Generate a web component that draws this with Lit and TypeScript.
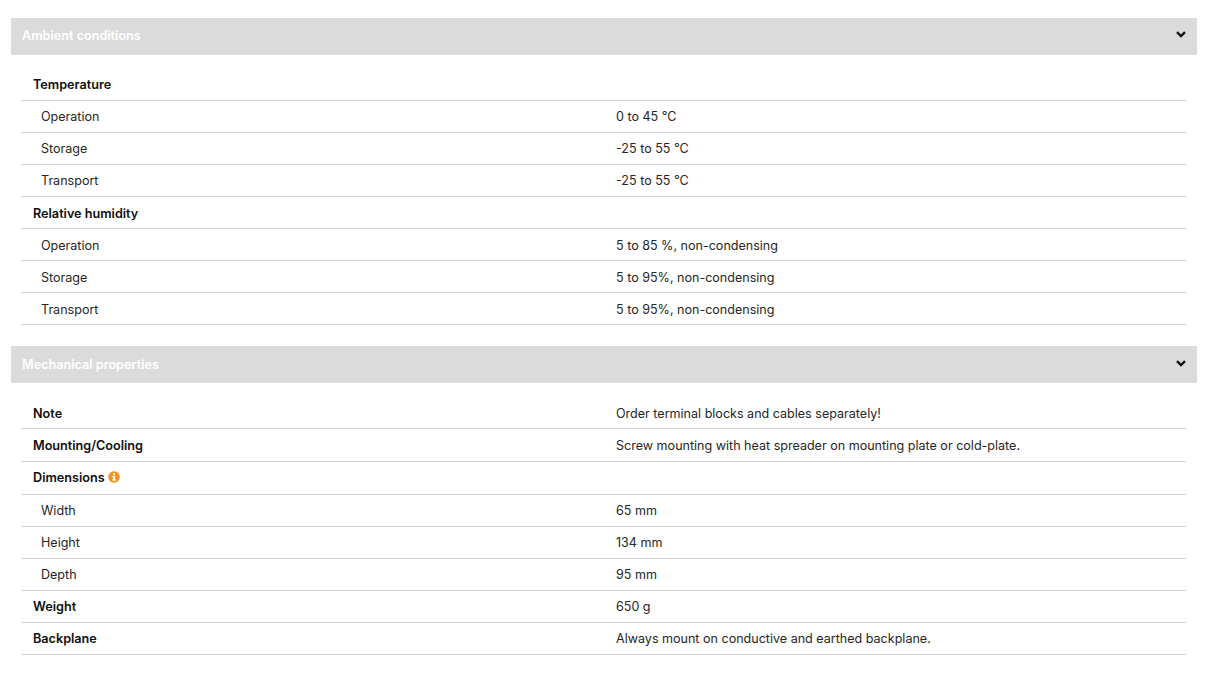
import { LitElement, html, css } from "lit";
import { customElement } from "lit/decorators.js";

type Row = { label: string; value?: string; kind: "head" | "sub"; info?: boolean; tall?: boolean; lowered?: boolean; raised?: boolean };

const ambient: Row[] = [
  { label: "Temperature", kind: "head" },
  { label: "Operation", value: "0 to 45 °C", kind: "sub" },
  { label: "Storage", value: "-25 to 55 °C", kind: "sub" },
  { label: "Transport", value: "-25 to 55 °C", kind: "sub" },
  { label: "Relative humidity", kind: "head", lowered: true },
  { label: "Operation", value: "5 to 85 %, non-condensing", kind: "sub", lowered: true },
  { label: "Storage", value: "5 to 95%, non-condensing", kind: "sub", lowered: true },
  { label: "Transport", value: "5 to 95%, non-condensing", kind: "sub", lowered: true },
];

const mechanical: Row[] = [
  { label: "Note", value: "Order terminal blocks and cables separately!", kind: "head", lowered: true },
  { label: "Mounting/Cooling", value: "Screw mounting with heat spreader on mounting plate or cold-plate.", kind: "head", tall: true },
  { label: "Dimensions", kind: "head", info: true, tall: true, raised: true },
  { label: "Width", value: "65 mm", kind: "sub" },
  { label: "Height", value: "134 mm", kind: "sub" },
  { label: "Depth", value: "95 mm", kind: "sub" },
  { label: "Weight", value: "650 g", kind: "head" },
  { label: "Backplane", value: "Always mount on conductive and earthed backplane.", kind: "head" },
];

@customElement("app-root")
export class AppRoot extends LitElement {
  static styles = css`
    :host {
      display: block;
      background: #fff;
      font-family: "Inter", "Liberation Sans", sans-serif;
      font-size: 12.55px;
      color: #262626;
      padding: 18px 14px 29px 11px;
    }
    .section + .section { margin-top: 21px; }
    .bar {
      height: 37px;
      background: #dbdbdb;
      color: #fff;
      font-weight: 600;
      font-size: 12.65px;
      display: flex;
      align-items: center;
      justify-content: space-between;
      padding: 0 11px 0 11px;
    }
    .bar span { padding-bottom: 1px; }
    .bar svg { display: block; padding-bottom: 2px; }
    .section:first-child .bar span { padding-bottom: 3px; }
    .section:first-child .bar svg { padding-bottom: 4px; }
    .rows { padding: 14px 11px 0 10px; }
    .row {
      display: grid;
      grid-template-columns: 595px 1fr;
      align-items: center;
      height: 31px;
      border-bottom: 1px solid #d2d2d2;
    }
    .row.tall { height: 32px; }
    .row.lowered { padding-top: 2px; height: 29px; }
    .row.raised { padding-bottom: 2px; height: 30px; }
    .name { padding-left: 12px; display: flex; align-items: center; gap: 3px; }
    .head .name { font-weight: 600; font-size: 12.65px; color: #0f0f0f; }
    .sub .name { padding-left: 20px; }
  `;

  private section(title: string, rows: Row[]) {
    return html`<div class="section">
      <div class="bar">
        <span>${title}</span>
        <svg width="10" height="7" viewBox="0 0 10 7" aria-hidden="true">
          <path d="M1 1.2 5 5 9 1.2" fill="none" stroke="#111" stroke-width="2.4" />
        </svg>
      </div>
      <div class="rows">
        ${rows.map(
          (r) => html`<div class="row ${r.kind} ${r.tall ? "tall" : ""} ${r.lowered ? "lowered" : ""} ${r.raised ? "raised" : ""}">
            <div class="name">
              ${r.label}
              ${r.info
                ? html`<svg width="12" height="12" viewBox="0 0 12 12" aria-hidden="true">
                    <circle cx="6" cy="6" r="5.8" fill="#f7941d" />
                    <rect x="5" y="2.3" width="2" height="1.8" fill="#fff" />
                    <path d="M4.2 5h2.8v3.6h1v1.2H4.2V8.6h1V6.2h-1z" fill="#fff" />
                  </svg>`
                : ""}
            </div>
            <div>${r.value ?? ""}</div>
          </div>`
        )}
      </div>
    </div>`;
  }

  render() {
    return html`${this.section("Ambient conditions", ambient)}${this.section("Mechanical properties", mechanical)}`;
  }
}
